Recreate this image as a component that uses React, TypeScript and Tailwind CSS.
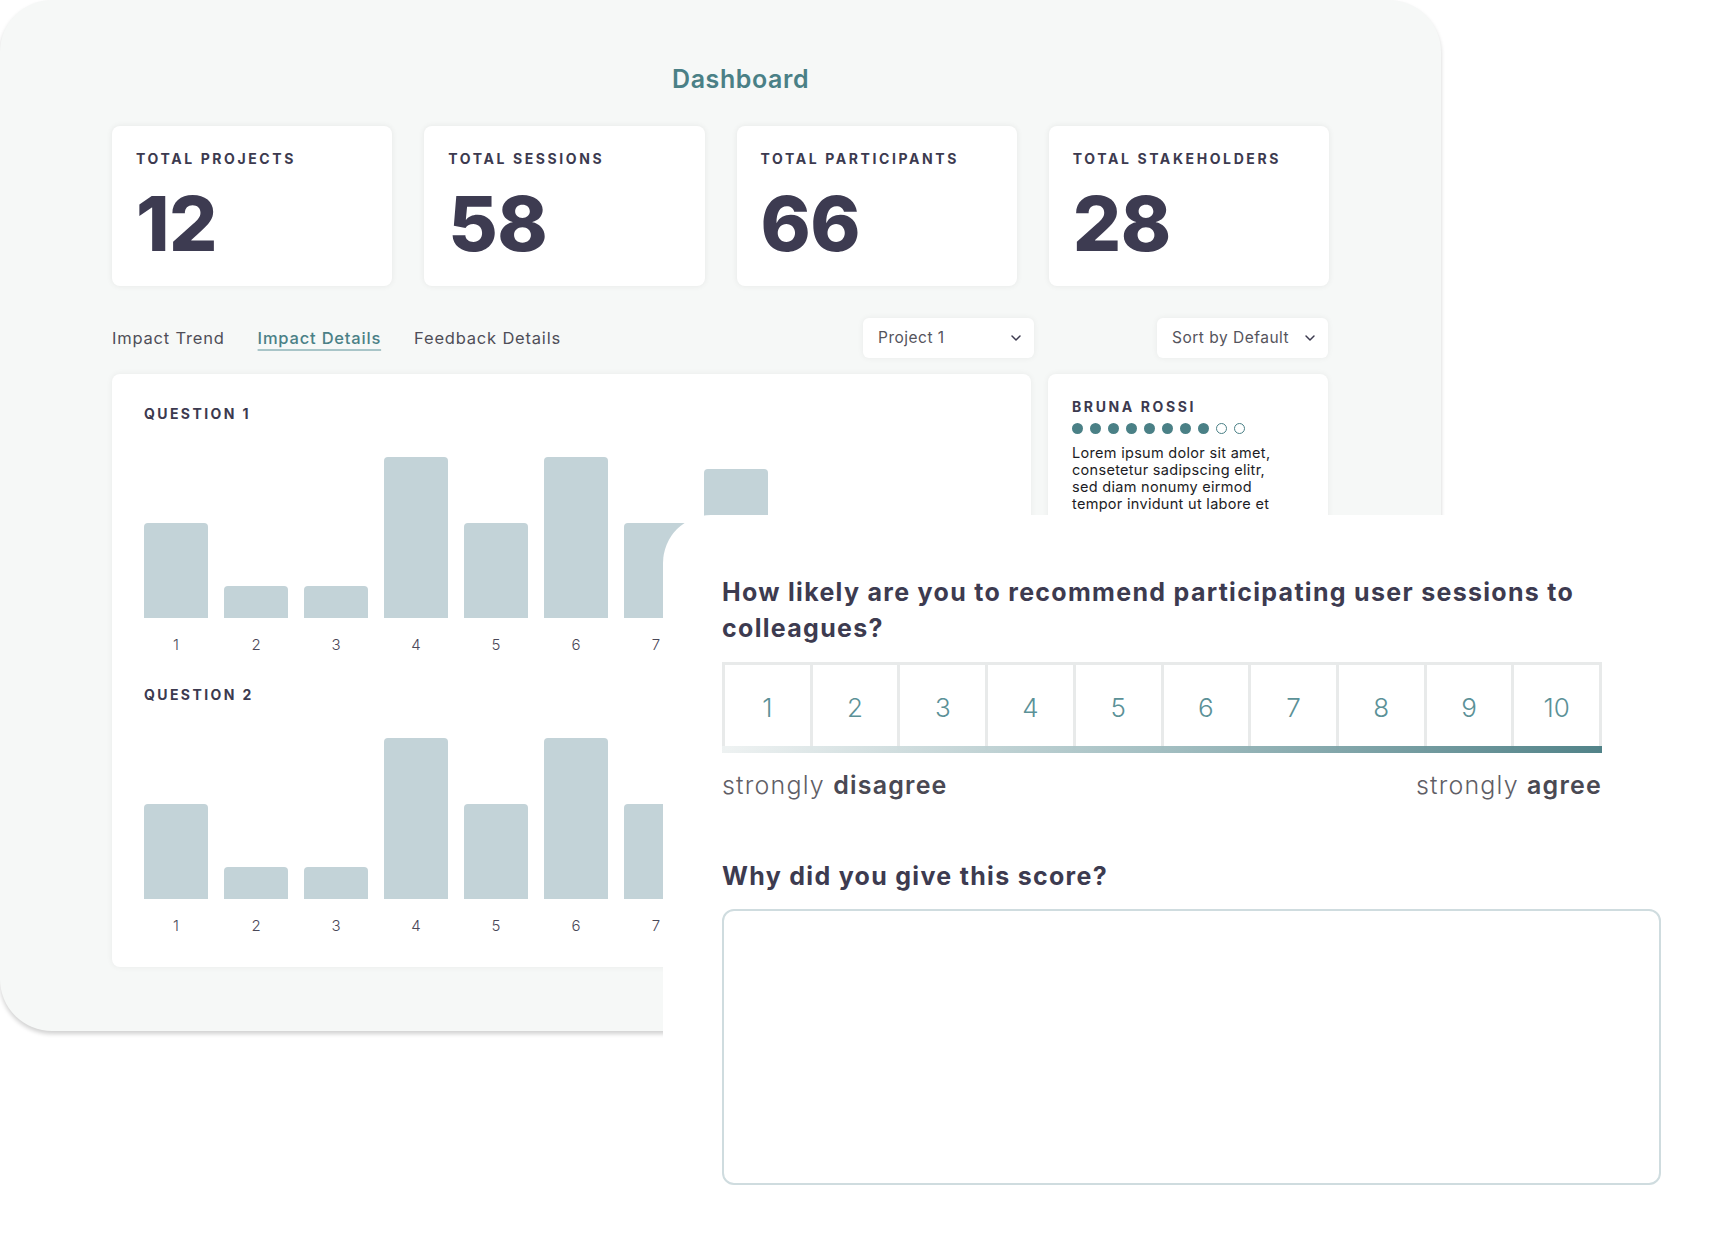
// Dashboard mock with an NPS survey card laid over its lower right part.
import { ChevronDown } from "lucide-react";

const stats = [
  { label: "TOTAL PROJECTS", value: "12" },
  { label: "TOTAL SESSIONS", value: "58" },
  { label: "TOTAL PARTICIPANTS", value: "66" },
  { label: "TOTAL STAKEHOLDERS", value: "28" },
];

// bar heights in px, the tallest is 161
const q1 = [95, 32, 32, 161, 95, 161, 95, 149, 60, 90];
const q2 = [95, 32, 32, 161, 95, 161, 95, 120, 60, 140];
// only the first seven axis labels are left uncovered by the survey card
const VISIBLE_LABELS = 7;

function StatCard({ label, value }: { label: string; value: string }) {
  return (
    <div className="h-[160px] rounded-[8px] bg-white px-6 pt-[24px] shadow-[0_0_6px_rgba(0,0,0,0.07)]">
      <div className="text-[14px] font-bold leading-[18px] tracking-[2.6px] text-[#3c3a4f]">
        {label}
      </div>
      <div className="mt-[17px] text-[76px] font-extrabold leading-[76px] tracking-[-0.5px] text-[#3d3b51]">
        {value}
      </div>
    </div>
  );
}

function BarChart({ title, bars }: { title: string; bars: number[] }) {
  return (
    <div>
      <div className="text-[14px] font-bold leading-[16px] tracking-[2.4px] text-[#3c3a4f]">
        {title}
      </div>
      <div className="mt-[35px] flex h-[161px] items-end gap-4">
        {bars.map((h, i) => (
          <div
            key={i}
            className="w-16 rounded-t-[4px] bg-[#c3d3d8]"
            style={{ height: h }}
          />
        ))}
      </div>
      <div className="mt-[17px] flex gap-4">
        {bars.slice(0, VISIBLE_LABELS).map((_, i) => (
          <div
            key={i}
            className="w-16 text-center text-[15px] font-light leading-[20px] text-[#4a4858]"
          >
            {i + 1}
          </div>
        ))}
      </div>
    </div>
  );
}

function Dropdown({ text, width }: { text: string; width: string }) {
  return (
    <div
      className={`flex h-10 items-center justify-between rounded-[6px] bg-white pl-[15px] pr-[10px] text-[15.5px] tracking-[0.5px] text-[#55545c] shadow-[0_0_6px_rgba(0,0,0,0.06)] ${width}`}
    >
      <span>{text}</span>
      <ChevronDown size={16} strokeWidth={2.2} className="text-[#3c3a4f]" />
    </div>
  );
}

export default function App() {
  return (
    <div className="relative h-[1243px] w-[1719px] overflow-hidden bg-white font-[Inter,sans-serif]">
      {/* dashboard panel */}
      <div className="w-[1441px] rounded-[52px] bg-[#f6f8f7] px-[112px] pb-[64px] pt-[63px] shadow-[0_3px_4px_rgba(0,0,0,0.18)]">
        <div className="pl-[560px] text-[25px] font-semibold leading-[32px] tracking-[0.6px] text-[#4a8086]">
          Dashboard
        </div>

        <div className="mt-[31px] grid grid-cols-4 gap-8">
          {stats.map((s) => (
            <StatCard key={s.label} {...s} />
          ))}
        </div>

        <div className="mt-8 grid grid-cols-[919px_280px] gap-[17px]">
          <div className="flex items-center justify-between">
            <div className="flex gap-[33px] text-[16.5px] tracking-[0.8px] text-[#4f4e58]">
              <span>Impact Trend</span>
              <span className="font-medium text-[#4a8086] underline decoration-[#a9c5c8] decoration-2 underline-offset-[5px]">
                Impact Details
              </span>
              <span>Feedback Details</span>
            </div>
            <Dropdown text="Project 1" width="w-[171px] -mr-[3px]" />
          </div>
          <div className="flex justify-end">
            <Dropdown text="Sort by Default" width="w-[171px]" />
          </div>
        </div>

        <div className="mt-4 grid grid-cols-[919px_280px] items-start gap-[17px]">
          <div className="rounded-[8px] bg-white px-8 pb-[31px] pt-[32px] shadow-[0_0_6px_rgba(0,0,0,0.06)]">
            <BarChart title="QUESTION 1" bars={q1} />
            <div className="mt-[32px]">
              <BarChart title="QUESTION 2" bars={q2} />
            </div>
          </div>

          <div className="rounded-[8px] bg-white px-6 pb-6 pt-[25px] shadow-[0_0_6px_rgba(0,0,0,0.06)]">
            <div className="text-[14px] font-bold leading-[16px] tracking-[2.6px] text-[#3c3a4f]">
              BRUNA ROSSI
            </div>
            <div className="mt-[8px] flex gap-[7px]">
              {Array.from({ length: 10 }).map((_, i) =>
                i < 8 ? (
                  <span key={i} className="h-[11px] w-[11px] rounded-full bg-[#4a8086]" />
                ) : (
                  <span
                    key={i}
                    className="h-[11px] w-[11px] rounded-full border-[1.5px] border-[#4a8086]"
                  />
                ),
              )}
            </div>
            <p className="mt-[10px] text-[14.5px] leading-[17px] tracking-[0.3px] text-[#1c1c24]">
              Lorem ipsum dolor sit amet,
              <br />
              consetetur sadipscing elitr,
              <br />
              sed diam nonumy eirmod
              <br />
              tempor invidunt ut labore et
              <br />
              dolore magna aliquyam erat,
              <br />
              sed diam voluptua.
            </p>
          </div>
        </div>
      </div>

      {/* survey card laid over the dashboard */}
      <div className="absolute bottom-0 left-[663px] right-0 top-[515px] rounded-tl-[48px] bg-white pl-[59px] pt-[59px] text-[#3d3b50]">
        <h2 className="text-[25px] font-bold leading-[36px] tracking-[1.3px]">
          How likely are you to recommend participating user sessions to
          <br />
          colleagues?
        </h2>

        <div className="relative mt-4 w-[880px]">
          <div className="flex gap-[3px] bg-[#e8eaea] p-[3px]">
            {Array.from({ length: 10 }).map((_, i) => (
              <div
                key={i}
                className="flex h-[85px] flex-1 items-center justify-center bg-white text-[26px] font-light text-[#5b9197]"
              >
                {i + 1}
              </div>
            ))}
          </div>
          <div className="absolute bottom-0 left-0 right-0 h-[7px] bg-gradient-to-r from-[#eef2f2] via-[#9fbcbf] to-[#497d83] opacity-95" />
        </div>

        <div className="mt-4 flex w-[880px] justify-between text-[25px] leading-[32px] tracking-[1.2px]">
          <span className="font-light text-[#5f5e66]">
            strongly <span className="font-semibold text-[#4a4953]">disagree</span>
          </span>
          <span className="font-light text-[#5f5e66]">
            strongly <span className="font-semibold text-[#4a4953]">agree</span>
          </span>
        </div>

        <h3 className="mt-[59px] text-[25px] font-bold leading-[32px] tracking-[1.3px]">
          Why did you give this score?
        </h3>

        <textarea
          className="mt-[17px] block h-[276px] w-[939px] resize-none rounded-[12px] border-2 border-[#cfdcdf] bg-white outline-none"
          aria-label="Why did you give this score?"
        />
      </div>
    </div>
  );
}
